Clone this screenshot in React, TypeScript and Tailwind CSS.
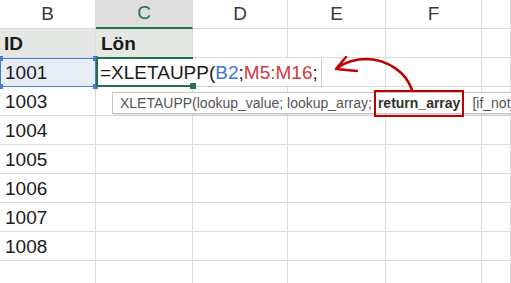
const cellFont = { fontFamily: '"Liberation Sans", Arial, sans-serif' };

const columns = ["B", "C", "D", "E", "F", ""];
const ids = ["1003", "1004", "1005", "1006", "1007", "1008", ""];

const rowGrid = "grid grid-cols-[96px_97px_95px_98px_96px_1fr]";
const cell = "h-[29px] border-r border-b border-[#dcdcdc]";

export default function App() {
  return (
    <div
      className="relative h-[283px] w-[511px] overflow-hidden bg-white text-[19px] text-[#1b1b1b]"
      style={cellFont}
    >
      {/* column headers */}
      <div className={rowGrid}>
        {columns.map((c) =>
          c === "C" ? (
            <div
              key={c}
              className="flex h-[29px] items-center justify-center border-r border-b-2 border-r-[#dcdcdc] border-b-[#217346] bg-[#dedede] text-[#217346]"
            >
              {c}
            </div>
          ) : (
            <div
              key={c || "g"}
              className={`${cell} flex items-center justify-center text-[#3a3a3a]`}
            >
              {c}
            </div>
          )
        )}
      </div>

      {/* table header */}
      <div className={rowGrid}>
        <div className={`${cell} flex items-center bg-[#e4e7e4] pl-[4px] pt-[2px] font-bold`}>ID</div>
        <div className={`${cell} flex items-center bg-[#e4e7e4] pl-[5px] pt-[2px] font-bold`}>Lön</div>
        <div className={cell} />
        <div className={cell} />
        <div className={cell} />
        <div className={cell} />
      </div>

      {/* row being edited */}
      <div className={`${rowGrid} relative`}>
        <div className="relative flex h-[29px] items-center border-[1.5px] border-[#4a7bd0] bg-[#e7edf7] pl-[4px] pt-[2px]">
          1001
          <span className="absolute -left-[3px] -top-[3px] h-[5px] w-[5px] bg-[#4a7bd0]" />
          <span className="absolute -right-[3px] -top-[3px] h-[5px] w-[5px] bg-[#4a7bd0]" />
          <span className="absolute -bottom-[3px] -left-[3px] h-[5px] w-[5px] bg-[#4a7bd0]" />
          <span className="absolute -bottom-[3px] -right-[3px] h-[5px] w-[5px] bg-[#4a7bd0]" />
        </div>
        <div className={cell} />
        <div className={cell} />
        <div className={cell} />
        <div className={cell} />
        <div className={cell} />

        <div className="absolute left-[96px] top-0 flex h-[29px] w-[226px] items-center border-r border-b border-[#cfcfcf] bg-white pl-[4px] pt-[2px] whitespace-nowrap">
          =XLETAUPP(<span className="text-[#3b78d8]">B2</span>;
          <span className="text-[#d23a3a]">M5:M16</span>;
        </div>
        <div className="pointer-events-none absolute left-[96px] top-[-1px] h-[30px] w-[97px] border-y-2 border-l-2 border-[#217346]" />
        <span className="absolute left-[190px] top-[25px] h-[6px] w-[6px] bg-[#217346]" />
      </div>

      {ids.map((id, i) => (
        <div key={i} className={rowGrid}>
          <div className={`${cell} flex items-center pl-[5px] pt-[2px]`}>{id}</div>
          <div className={cell} />
          <div className={cell} />
          <div className={cell} />
          <div className={cell} />
          <div className={cell} />
        </div>
      ))}

      {/* function tooltip */}
      <div className="absolute left-[112px] top-[92px] flex h-[22px] w-[420px] items-center whitespace-nowrap border border-[#c4c4c4] bg-white pl-[7px] text-[14px] text-[#555] shadow-[1px_1px_2px_rgba(0,0,0,0.15)]">
        XLETAUPP(lookup_value; lookup_array;
        <span className="mx-[2px] -my-[2px] border-2 border-[#c00000] px-[2px] py-[1px] font-bold text-[#333]">
          return_array
        </span>
        <span className="ml-[6px]">[if_not_found]</span>
      </div>

      {/* annotation arrow */}
      <svg
        className="pointer-events-none absolute inset-0"
        width="511"
        height="283"
        viewBox="0 0 511 283"
        fill="none"
      >
        <path
          d="M412 90 C406 72 388 60 367 59 C354 59 344 63 337 68"
          stroke="#c00000"
          strokeWidth="2.5"
          strokeLinecap="round"
        />
        <path
          d="M346 57 L336 69 L357 71"
          stroke="#c00000"
          strokeWidth="2.5"
          strokeLinecap="round"
          strokeLinejoin="round"
        />
      </svg>
    </div>
  );
}
